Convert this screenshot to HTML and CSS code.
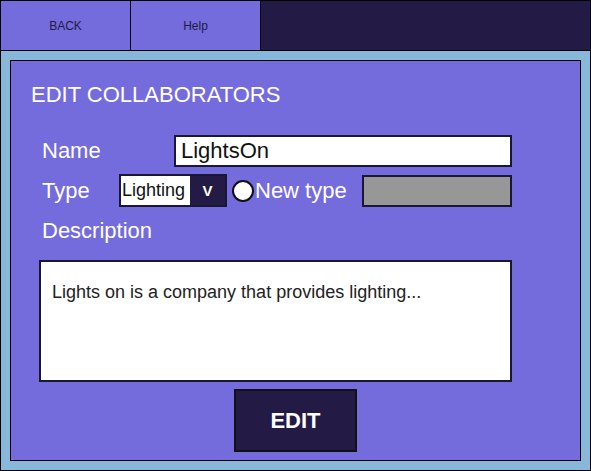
FILE: index.html
```html
<!DOCTYPE html>
<html>
<head>
<meta charset="utf-8">
<link rel="stylesheet" href="styles.css">
</head>
<body>
<div class="app">
  <nav class="nav">
    <div class="nav-btn">BACK</div>
    <div class="nav-btn">Help</div>
    <div class="nav-fill"></div>
  </nav>
  <main class="main">
    <section class="panel">
      <h1 class="title">EDIT COLLABORATORS</h1>
      <div class="row row-name">
        <span class="label label-name">Name</span>
        <div class="field field-name">LightsOn</div>
      </div>
      <div class="row row-type">
        <span class="label label-type">Type</span>
        <div class="select">
          <span class="select-value">Lighting</span>
          <span class="select-arrow">V</span>
        </div>
        <span class="radio"></span>
        <span class="label label-new">New type</span>
        <div class="field field-gray"></div>
      </div>
      <div class="row row-desc">
        <span class="label">Description</span>
      </div>
      <div class="textarea">Lights on is a company that provides lighting...</div>
      <div class="actions">
        <div class="edit-btn">EDIT</div>
      </div>
    </section>
  </main>
</div>
</body>
</html>
```

FILE: styles.css
```css
* { box-sizing: border-box; }
html, body { margin: 0; padding: 0; }
body {
  width: 591px;
  height: 471px;
  font-family: "Liberation Sans", Arial, sans-serif;
  overflow: hidden;
}
.app {
  width: 591px;
  height: 471px;
  border: 1px solid #000;
  display: flex;
  flex-direction: column;
  background: #87b8d9;
}
.nav {
  height: 50px;
  display: flex;
  border-bottom: 1px solid #000;
  flex: none;
}
.nav-btn {
  width: 130px;
  background: #746bdd;
  border-right: 1px solid #000;
  display: flex;
  align-items: center;
  justify-content: center;
  font-size: 12px;
  color: #221b45;
}
.nav-fill {
  flex: 1;
  background: #231b46;
}
.main {
  flex: 1;
  padding: 9px;
  display: flex;
}
.panel {
  flex: 1;
  background: #746bdd;
  border: 1px solid #000;
  padding-top: 22px;
  color: #fff;
}
.title {
  margin: 0 0 0 20px;
  font-size: 22px;
  font-weight: normal;
  line-height: 24px;
  height: 24px;
}
.row {
  display: flex;
  align-items: center;
  margin-left: 31px;
}
.label {
  font-size: 22px;
  line-height: 24px;
}
.row-name {
  margin-top: 28px;
  height: 32px;
}
.label-name { width: 132px; }
.field {
  border: 2px solid #1a1733;
  height: 32px;
}
.field-name {
  width: 338px;
  background: #fff;
  color: #111;
  font-size: 22px;
  line-height: 28px;
  padding-left: 5px;
}
.row-type {
  margin-top: 7px;
  height: 33px;
}
.label-type { width: 77px; }
.select {
  width: 108px;
  height: 33px;
  border: 2px solid #1a1733;
  display: flex;
}
.select-value {
  width: 69px;
  background: #fff;
  color: #111;
  font-size: 18px;
  line-height: 29px;
  padding-left: 1px;
}
.select-arrow {
  flex: 1;
  background: #231b46;
  color: #fff;
  font-weight: bold;
  font-size: 15px;
  display: flex;
  align-items: center;
  justify-content: center;
}
.radio {
  width: 22px;
  height: 22px;
  border-radius: 50%;
  background: #fff;
  border: 2px solid #111;
  margin-left: 5px;
}
.label-new {
  margin-left: 1px;
  width: 107px;
}
.field-gray {
  width: 150px;
  background: #979797;
}
.row-desc {
  margin-top: 12px;
}
.textarea {
  margin: 17px 0 0 28px;
  width: 473px;
  height: 122px;
  background: #fff;
  border: 2px solid #1a1733;
  color: #222;
  font-size: 18px;
  padding: 20px 0 0 11px;
  line-height: 20px;
}
.actions {
  display: flex;
  justify-content: center;
  margin-top: 7px;
}
.edit-btn {
  width: 123px;
  height: 63px;
  background: #231b46;
  border: 2px solid #111;
  color: #fff;
  font-weight: bold;
  font-size: 22px;
  display: flex;
  align-items: center;
  justify-content: center;
}
```
